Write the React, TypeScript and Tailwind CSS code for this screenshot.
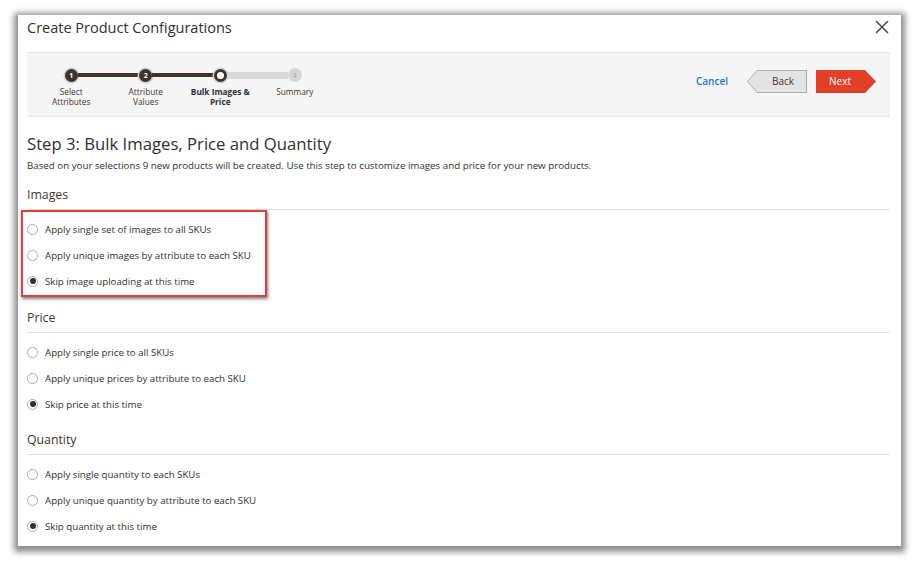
type StepState = "done" | "current" | "todo";

interface Step {
  n: string;
  label: string[];
  state: StepState;
}

const steps: Step[] = [
  { n: "1", label: ["Select", "Attributes"], state: "done" },
  { n: "2", label: ["Attribute", "Values"], state: "done" },
  { n: "3", label: ["Bulk Images &", "Price"], state: "current" },
  { n: "4", label: ["Summary"], state: "todo" },
];

function Segment({ kind }: { kind: "dark" | "light" | "none" }) {
  if (kind === "none") return <div className="flex-1" />;
  if (kind === "dark") return <div className="h-[4px] flex-1 bg-[#3d3430]" />;
  return <div className="h-[7px] flex-1 bg-[#d9d9d9]" />;
}

function StepDot({ step }: { step: Step }) {
  if (step.state === "done") {
    return (
      <div className="flex h-[13px] w-[13px] shrink-0 items-center justify-center rounded-full bg-[#3d3430] text-[7px] font-bold leading-none text-white shadow-[0_0_0_1.5px_#d2d2d2]">
        {step.n}
      </div>
    );
  }
  if (step.state === "current") {
    return (
      <div className="h-[13px] w-[13px] shrink-0 rounded-full border-[3px] border-[#3d3430] bg-white shadow-[0_0_0_1.5px_#d2d2d2]" />
    );
  }
  return (
    <div className="flex h-[14px] w-[14px] shrink-0 items-center justify-center rounded-full bg-[#d6d6d6] text-[7px] leading-none text-[#a8a8a8]">
      {step.n}
    </div>
  );
}

function StepNav() {
  return (
    <div className="flex pl-[7px]">
      {steps.map((step, i) => {
        const left: "dark" | "light" | "none" =
          i === 0 ? "none" : i <= 2 ? "dark" : "light";
        const right: "dark" | "light" | "none" =
          i === 3 ? "none" : i < 2 ? "dark" : "light";
        return (
          <div key={step.n} className="flex w-[74.5px] flex-col items-center">
            <div className="flex h-[14px] w-full items-center">
              <Segment kind={left} />
              <StepDot step={step} />
              <Segment kind={right} />
            </div>
            <div
              className={
                "mt-[5px] text-center text-[8.3px] leading-[10px] " +
                (step.state === "current"
                  ? "font-bold text-[#303030]"
                  : "text-[#41362f]")
              }
            >
              {step.label.map((l) => (
                <div key={l}>{l}</div>
              ))}
            </div>
          </div>
        );
      })}
    </div>
  );
}

function Radio({ label, checked }: { label: string; checked?: boolean }) {
  return (
    <div className="flex h-[26px] items-center gap-[7px]">
      <div className="flex h-[11px] w-[11px] items-center justify-center rounded-full border border-[#adadad] bg-white">
        {checked && <div className="h-[6px] w-[6px] rounded-full bg-[#303030]" />}
      </div>
      <span className="text-[9.7px] leading-[13px] text-[#303030]">{label}</span>
    </div>
  );
}

function SectionTitle({ children }: { children: string }) {
  return (
    <div className="border-b border-[#e3e3e3] pb-[6px] text-[12.3px] leading-[16px] text-[#41362f]">
      {children}
    </div>
  );
}

export default function App() {
  return (
    <div className="h-[561px] w-[919px] bg-white pl-[18px] pt-[15px] font-['Open_Sans',sans-serif]">
      <div className="flex h-[531px] w-[883px] flex-col bg-white pl-[9px] pr-[11px] shadow-[0_2px_6px_4px_rgba(0,0,0,0.45)]">
        {/* header */}
        <div className="flex h-[37px] items-start justify-between">
          <h1 className="pt-[3px] text-[14.5px] leading-[20px] text-[#303030]">
            Create Product Configurations
          </h1>
          <svg
            className="mr-[1px] mt-[5px]"
            width="14"
            height="14"
            viewBox="0 0 14 14"
            fill="none"
            stroke="#514943"
            strokeWidth="1.5"
          >
            <path d="M1 1 L13 13 M13 1 L1 13" />
          </svg>
        </div>

        {/* wizard bar */}
        <div className="flex h-[65px] items-start border-y border-[#e3e3e3] bg-[#f5f5f5] pr-[14px] pt-[15px]">
          <StepNav />
          <div className="ml-auto mt-[2px] flex items-center">
            <span className="mr-[19px] text-[10px] font-semibold text-[#1979c3]">
              Cancel
            </span>
            <div className="h-[23px] w-[60px] bg-[#adadad] [clip-path:polygon(10px_0,100%_0,100%_100%,10px_100%,0_50%)]">
              <div className="m-px flex h-[21px] w-[58px] items-center justify-center bg-[#e3e3e3] pl-[12px] text-[10px] text-[#41362f] [clip-path:polygon(9px_0,100%_0,100%_100%,9px_100%,0_50%)]">
                Back
              </div>
            </div>
            <div className="ml-[9px] flex h-[23px] w-[60px] items-center bg-[#e23f29] pl-[13px] text-[10px] text-white [clip-path:polygon(0_0,calc(100%_-_11px)_0,100%_50%,calc(100%_-_11px)_100%,0_100%)]">
              Next
            </div>
          </div>
        </div>

        {/* body */}
        <h2 className="mt-[16px] text-[16.7px] leading-[22px] text-[#303030]">
          Step 3: Bulk Images, Price and Quantity
        </h2>
        <p className="mt-[4px] text-[9.75px] leading-[13px] text-[#303030]">
          Based on your selections 9 new products will be created. Use this step to
          customize images and price for your new products.
        </p>

        <div className="mt-[15px]">
          <SectionTitle>Images</SectionTitle>
          <div className="relative pt-[6px]">
            <Radio label="Apply single set of images to all SKUs" />
            <Radio label="Apply unique images by attribute to each SKU" />
            <Radio label="Skip image uploading at this time" checked />
            <div className="absolute -bottom-[3px] -left-[6px] top-0 w-[246px] border-2 border-[#e43b3b] shadow-[1px_2px_3px_rgba(0,0,0,0.5)]" />
          </div>
        </div>

        <div className="mt-[16px]">
          <SectionTitle>Price</SectionTitle>
          <div className="pt-[6px]">
            <Radio label="Apply single price to all SKUs" />
            <Radio label="Apply unique prices by attribute to each SKU" />
            <Radio label="Skip price at this time" checked />
          </div>
        </div>

        <div className="mt-[15px]">
          <SectionTitle>Quantity</SectionTitle>
          <div className="pt-[6px]">
            <Radio label="Apply single quantity to each SKUs" />
            <Radio label="Apply unique quantity by attribute to each SKU" />
            <Radio label="Skip quantity at this time" checked />
          </div>
        </div>
      </div>
    </div>
  );
}
